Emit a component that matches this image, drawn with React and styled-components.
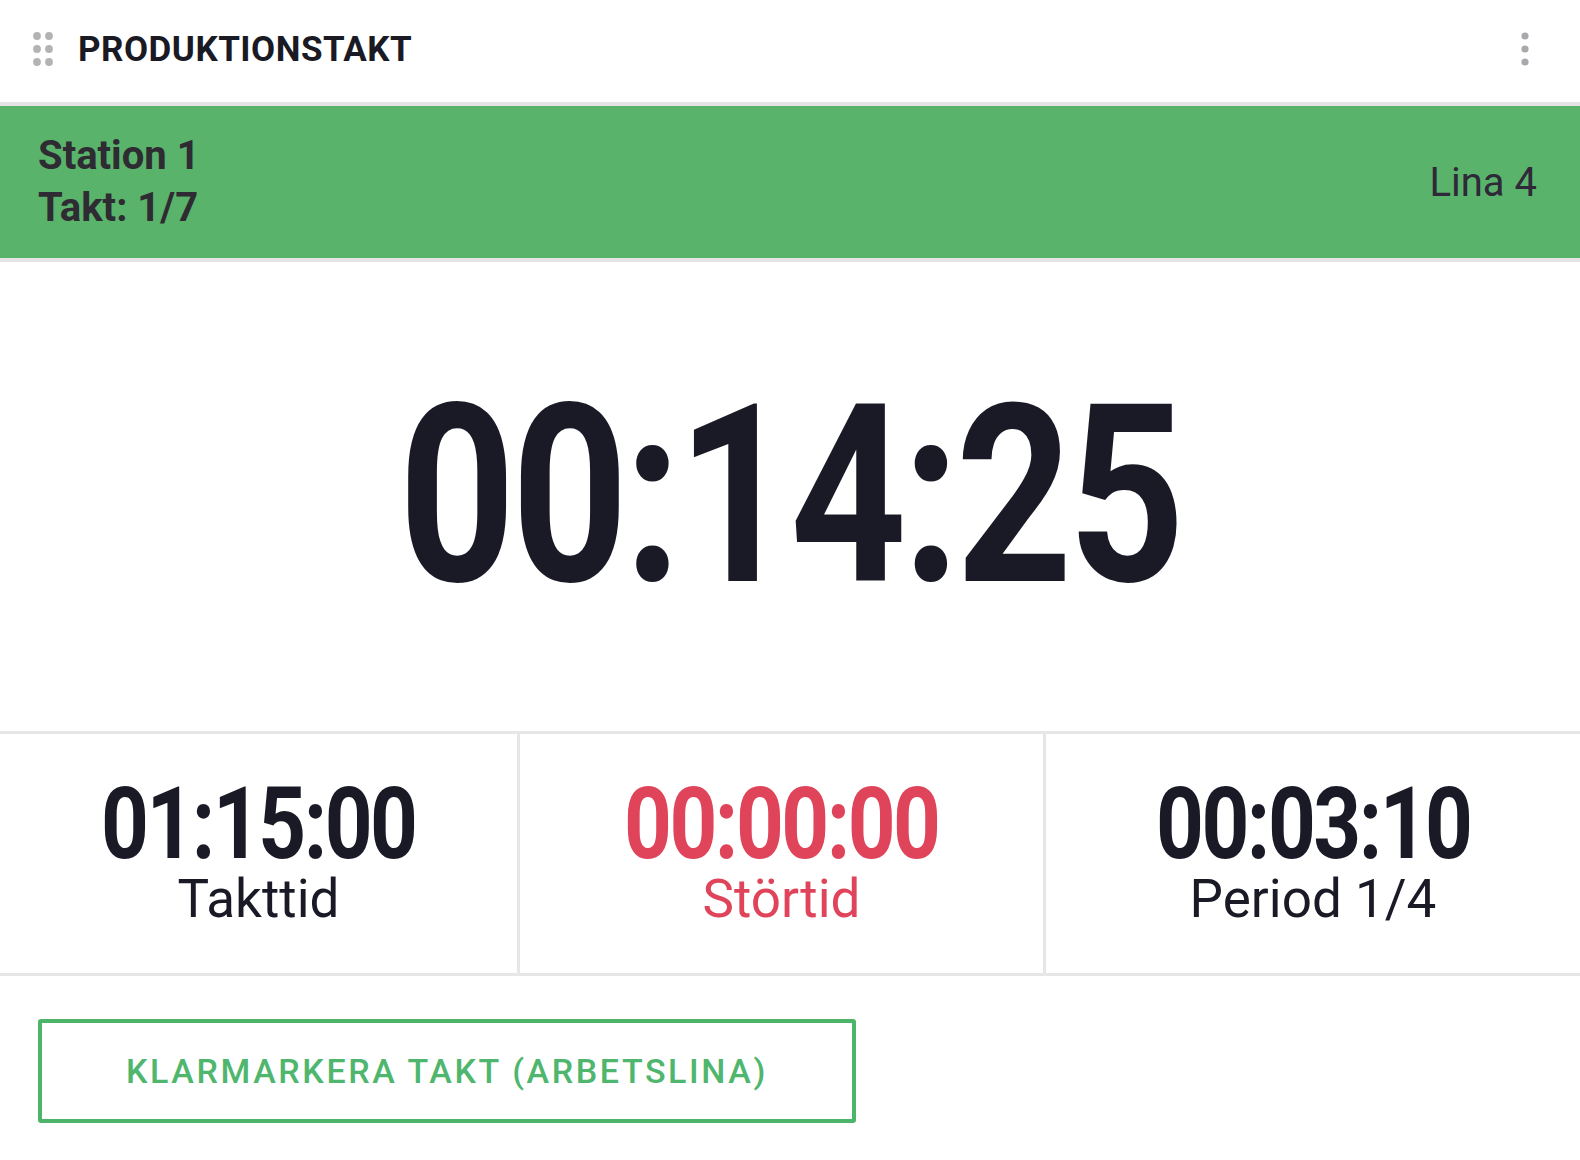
import React from "react";
import styled, { createGlobalStyle } from "styled-components";

const Global = createGlobalStyle`
  html, body { margin: 0; padding: 0; background: #ffffff; }
  body { font-family: Roboto, "Liberation Sans", sans-serif; color: #1a1b25; }
  * { box-sizing: border-box; }
`;

const Page = styled.div`
  width: 1580px;
  min-height: 1160px;
  background: #fff;
`;

const Header = styled.header`
  display: flex;
  align-items: center;
  height: 106px;
  padding: 0 51px 4px 33px;
  border-bottom: 4px solid #e4e4e4;
`;

const Title = styled.h1`
  margin: 0 0 0 25px;
  flex: 1;
  font-size: 35px;
  font-weight: 700;
  letter-spacing: 0.5px;
  color: #191a24;
`;

const StatusBand = styled.section`
  display: flex;
  align-items: center;
  justify-content: space-between;
  height: 156px;
  padding: 0 43px 0 38px;
  background: #59b36a;
  border-bottom: 4px solid #e4e4e4;
`;

const StationInfo = styled.div`
  font-size: 40px;
  font-weight: 700;
  line-height: 52px;
  color: #2e2b33;
`;

const LineName = styled.div`
  font-size: 40px;
  font-weight: 400;
  color: #2e2838;
`;

const ClockArea = styled.section`
  display: flex;
  align-items: center;
  justify-content: center;
  height: 472px;
  border-bottom: 3px solid #e6e6e6;
`;

const Digits = styled.span`
  display: inline-block;
  font-weight: 700;
  font-size: ${(p) => p.$size}px;
  line-height: ${(p) => p.$lh}px;
  letter-spacing: ${(p) => p.$ls || "-0.02em"};
  transform: scaleX(${(p) => p.$sx || 0.82});
  color: ${(p) => p.$color || "#191a25"};
  white-space: nowrap;
`;

const Stats = styled.section`
  display: grid;
  grid-template-columns: 517px 526px 1fr;
  height: 242px;
  border-bottom: 3px solid #e6e6e6;
`;

const StatCell = styled.div`
  display: flex;
  flex-direction: column;
  align-items: center;
  justify-content: center;
  border-left: ${(p) => (p.$first ? "none" : "3px solid #e6e6e6")};
  padding-top: 2px;
`;

const StatLabel = styled.div`
  font-size: 53px;
  line-height: 62px;
  font-weight: 400;
  color: ${(p) => p.$color || "#191a25"};
`;

const Footer = styled.div`
  padding: 43px 0 0 38px;
`;

const ActionButton = styled.button`
  width: 818px;
  height: 104px;
  background: #fff;
  border: 4px solid #4db56a;
  border-radius: 3px;
  font-family: Roboto, "Liberation Sans", sans-serif;
  font-size: 34px;
  font-weight: 500;
  letter-spacing: 2.6px;
  color: #4fb66d;
  text-transform: uppercase;
  cursor: pointer;
`;

const DragHandle = () => (
  <svg width="20" height="34" viewBox="0 0 20 34" aria-hidden="true">
    {[4, 17, 30].map((cy) =>
      [4, 16].map((cx) => (
        <circle key={`${cx}-${cy}`} cx={cx} cy={cy} r="3.9" fill="#b3b3b3" />
      ))
    )}
  </svg>
);

const Kebab = () => (
  <svg width="8" height="34" viewBox="0 0 8 34" aria-hidden="true">
    {[4, 17, 30].map((cy) => (
      <circle key={cy} cx="4" cy={cy} r="3.6" fill="#a9a9ad" />
    ))}
  </svg>
);

const stats = [
  { value: "01:15:00", label: "Takttid" },
  { value: "00:00:00", label: "Störtid", color: "#e0445a" },
  { value: "00:03:10", label: "Period 1/4" },
];

export default function App() {
  return (
    <Page>
      <Global />
      <Header>
        <DragHandle />
        <Title>PRODUKTIONSTAKT</Title>
        <Kebab />
      </Header>
      <StatusBand>
        <StationInfo>
          <div>Station 1</div>
          <div>Takt: 1/7</div>
        </StationInfo>
        <LineName>Lina 4</LineName>
      </StatusBand>
      <ClockArea>
        <Digits $size={248} $lh={200}>00:14:25</Digits>
      </ClockArea>
      <Stats>
        {stats.map((s, i) => (
          <StatCell key={s.label} $first={i === 0}>
            <Digits $size={100} $lh={88} $ls="-0.03em" $sx={0.835} $color={s.color}>
              {s.value}
            </Digits>
            <StatLabel $color={s.color}>{s.label}</StatLabel>
          </StatCell>
        ))}
      </Stats>
      <Footer>
        <ActionButton>Klarmarkera takt (Arbetslina)</ActionButton>
      </Footer>
    </Page>
  );
}
